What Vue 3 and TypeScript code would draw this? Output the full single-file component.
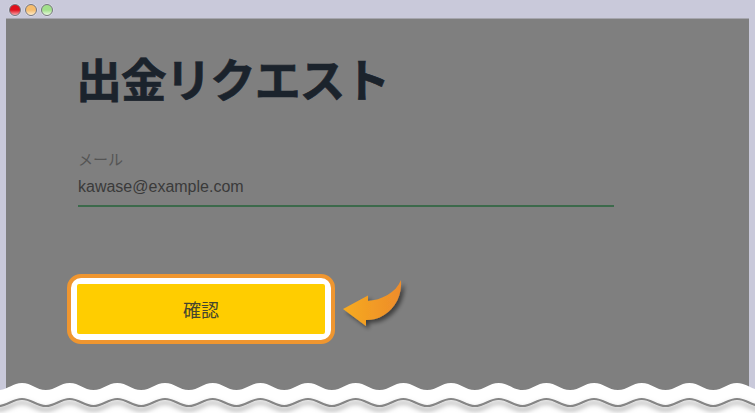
<script setup lang="ts">
const period = 47.67
function wave(y0: number, amp: number): string {
  let x = 22 - period * 1.5
  let d = `M${x} ${y0 + amp}`
  let up = true
  for (let i = 0; i < 36; i++) {
    const nx = x + period / 2
    const ny = up ? y0 : y0 + amp
    const cy1 = up ? y0 + amp : y0
    d += ` C${x + period * 0.2} ${cy1} ${nx - period * 0.2} ${ny} ${nx} ${ny}`
    x = nx
    up = !up
  }
  return d
}
const whiteFill = `${wave(14, 7)} V60 H-60 Z`
const bottomEdge = wave(30, 7)
</script>

<template>
  <div class="window">
    <header class="titlebar">
      <span class="light red"></span>
      <span class="light amber"></span>
      <span class="light green"></span>
    </header>
    <main class="page">
      <h1 class="title">出金リクエスト</h1>
      <div class="field">
        <label class="label">メール</label>
        <div class="value">kawase@example.com</div>
      </div>
      <div class="actions">
        <div class="highlight">
          <button class="confirm" type="button">確認</button>
        </div>
        <svg class="arrow" width="64" height="54" viewBox="0 0 64 54">
          <defs>
            <linearGradient id="arrowFill" x1="0" x2="1" y1="0" y2="0">
              <stop offset="0" stop-color="#f6ab1f" />
              <stop offset="1" stop-color="#ee8c2b" />
            </linearGradient>
            <filter id="arrowShadow" x="-20%" y="-20%" width="150%" height="150%">
              <feDropShadow dx="3" dy="3" stdDeviation="2.2" flood-color="#000" flood-opacity="0.5" />
            </filter>
          </defs>
          <path
            d="M1 31 L26 17.500 L26 23 C39 22 54 15 59 2 C60 16 54 30 42 37 C36 41 30 42 24 42 L24 48 Z"
            fill="url(#arrowFill)"
            filter="url(#arrowShadow)"
          />
        </svg>
      </div>
    </main>
    <svg class="tear" width="755" height="46" viewBox="0 0 755 46">
      <defs>
        <filter id="tearShadow" x="-5%" y="-50%" width="110%" height="250%">
          <feDropShadow dx="0" dy="3.500" stdDeviation="2.4" flood-color="#000" flood-opacity="0.5" />
        </filter>
      </defs>
      <path :d="whiteFill" fill="#ffffff" />
      <path :d="bottomEdge" fill="none" stroke="#858585" stroke-width="2.2" filter="url(#tearShadow)" />
    </svg>
  </div>
</template>

<style>
html,
body {
  margin: 0;
  background: #ffffff;
}
</style>

<style scoped>
.window {
  position: relative;
  width: 755px;
  height: 415px;
  overflow: hidden;
  background: #c9c9da;
  display: flex;
  flex-direction: column;
}
.titlebar {
  height: 18px;
  flex: none;
  display: flex;
  align-items: center;
  gap: 4px;
  padding: 2px 0 0 9px;
  box-sizing: border-box;
}
.light {
  width: 12px;
  height: 12px;
  border-radius: 50%;
  box-sizing: border-box;
  border: 1px solid #77777f;
  box-shadow: 0 0 0 0.5px #e6e6ee;
}
.red {
  background: linear-gradient(#e0101c 0 50%, #f8a6aa 100%);
}
.amber {
  background: linear-gradient(#f5bd6e 0 50%, #fdebcb 100%);
}
.green {
  background: linear-gradient(#a2e08c 0 50%, #e9f9df 100%);
}
.page {
  flex: 1;
  margin: 0 6px;
  background: #7f7f7f;
  border-top: 1px solid #a6a6ae;
  padding: 28px 0 0 72px;
  display: flex;
  flex-direction: column;
}
.title {
  margin: 0 0 0 -2px;
  font: 700 46px/60px "Noto Sans CJK JP", "Liberation Sans", sans-serif;
  letter-spacing: -1.300px;
  color: #1b232c;
  -webkit-text-stroke: 0.6px #1b232c;
}
.field {
  margin-top: 42px;
  width: 536px;
  border-bottom: 2px solid #3c6a4b;
  padding-bottom: 8px;
}
.label {
  display: block;
  font: 400 15px/20px "Noto Sans CJK JP", "Liberation Sans", sans-serif;
  color: #545454;
}
.value {
  margin-top: 8px;
  font: 400 16px/20px "Liberation Sans", "Noto Sans CJK JP", sans-serif;
  color: #3a3a3a;
}
.actions {
  margin: 67px 0 0 -11px;
  display: flex;
  align-items: center;
  gap: 7px;
}
.highlight {
  width: 268px;
  height: 70px;
  box-sizing: border-box;
  border: 4px solid #ef9630;
  border-radius: 14px;
  background: #ffffff;
  padding: 6px;
  flex: none;
}
.confirm {
  display: block;
  width: 100%;
  height: 100%;
  border: 0;
  border-radius: 2px;
  background: #ffcd00;
  color: #45452f;
  font: 400 18px "Noto Sans CJK JP", "Liberation Sans", sans-serif;
  padding: 0;
}
.arrow {
  flex: none;
  display: block;
  overflow: visible;
  margin-bottom: 8px;
}
.tear {
  position: absolute;
  left: 0;
  top: 369px;
}
</style>
